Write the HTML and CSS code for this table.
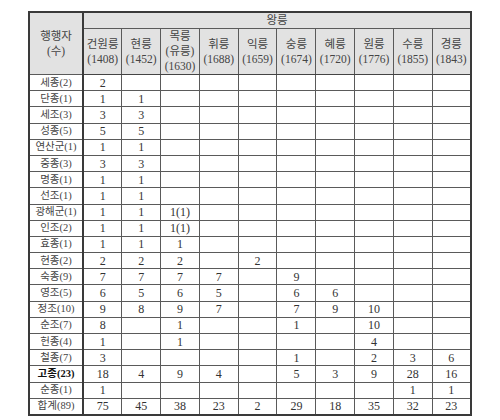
FILE: index.html
```html
<!DOCTYPE html>
<html lang="ko">
<head>
<meta charset="utf-8">
<link rel="stylesheet" href="styles.css">
</head>
<body>
<table class="tbl">
  <colgroup>
    <col class="c-first">
    <col span="10" class="c-data">
  </colgroup>
  <thead>
    <tr class="h1">
      <th rowspan="2" class="first">행행자<br>(수)</th>
      <th colspan="10">왕릉</th>
    </tr>
    <tr class="h2">
      <th>건원릉<br>(1408)</th>
      <th>현릉<br>(1452)</th>
      <th>목릉<br>(유릉)<br>(1630)</th>
      <th>휘릉<br>(1688)</th>
      <th>익릉<br>(1659)</th>
      <th>숭릉<br>(1674)</th>
      <th>혜릉<br>(1720)</th>
      <th>원릉<br>(1776)</th>
      <th>수릉<br>(1855)</th>
      <th>경릉<br>(1843)</th>
    </tr>
  </thead>
  <tbody>
    <tr><td class="first">세종(2)</td><td>2</td><td></td><td></td><td></td><td></td><td></td><td></td><td></td><td></td><td></td></tr>
    <tr><td class="first">단종(1)</td><td>1</td><td>1</td><td></td><td></td><td></td><td></td><td></td><td></td><td></td><td></td></tr>
    <tr><td class="first">세조(3)</td><td>3</td><td>3</td><td></td><td></td><td></td><td></td><td></td><td></td><td></td><td></td></tr>
    <tr><td class="first">성종(5)</td><td>5</td><td>5</td><td></td><td></td><td></td><td></td><td></td><td></td><td></td><td></td></tr>
    <tr><td class="first">연산군(1)</td><td>1</td><td>1</td><td></td><td></td><td></td><td></td><td></td><td></td><td></td><td></td></tr>
    <tr><td class="first">중종(3)</td><td>3</td><td>3</td><td></td><td></td><td></td><td></td><td></td><td></td><td></td><td></td></tr>
    <tr><td class="first">명종(1)</td><td>1</td><td>1</td><td></td><td></td><td></td><td></td><td></td><td></td><td></td><td></td></tr>
    <tr><td class="first">선조(1)</td><td>1</td><td>1</td><td></td><td></td><td></td><td></td><td></td><td></td><td></td><td></td></tr>
    <tr><td class="first">광해군(1)</td><td>1</td><td>1</td><td>1(1)</td><td></td><td></td><td></td><td></td><td></td><td></td><td></td></tr>
    <tr><td class="first">인조(2)</td><td>1</td><td>1</td><td>1(1)</td><td></td><td></td><td></td><td></td><td></td><td></td><td></td></tr>
    <tr><td class="first">효종(1)</td><td>1</td><td>1</td><td>1</td><td></td><td></td><td></td><td></td><td></td><td></td><td></td></tr>
    <tr><td class="first">현종(2)</td><td>2</td><td>2</td><td>2</td><td></td><td>2</td><td></td><td></td><td></td><td></td><td></td></tr>
    <tr><td class="first">숙종(9)</td><td>7</td><td>7</td><td>7</td><td>7</td><td></td><td>9</td><td></td><td></td><td></td><td></td></tr>
    <tr><td class="first">영조(5)</td><td>6</td><td>5</td><td>6</td><td>5</td><td></td><td>6</td><td>6</td><td></td><td></td><td></td></tr>
    <tr><td class="first">정조(10)</td><td>9</td><td>8</td><td>9</td><td>7</td><td></td><td>7</td><td>9</td><td>10</td><td></td><td></td></tr>
    <tr><td class="first">순조(7)</td><td>8</td><td></td><td>1</td><td></td><td></td><td>1</td><td></td><td>10</td><td></td><td></td></tr>
    <tr><td class="first">헌종(4)</td><td>1</td><td></td><td>1</td><td></td><td></td><td></td><td></td><td>4</td><td></td><td></td></tr>
    <tr><td class="first">철종(7)</td><td>3</td><td></td><td></td><td></td><td></td><td>1</td><td></td><td>2</td><td>3</td><td>6</td></tr>
    <tr><td class="first bold">고종(23)</td><td>18</td><td>4</td><td>9</td><td>4</td><td></td><td>5</td><td>3</td><td>9</td><td>28</td><td>16</td></tr>
    <tr><td class="first">순종(1)</td><td>1</td><td></td><td></td><td></td><td></td><td></td><td></td><td></td><td>1</td><td>1</td></tr>
    <tr><td class="first">합계(89)</td><td>75</td><td>45</td><td>38</td><td>23</td><td>2</td><td>29</td><td>18</td><td>35</td><td>32</td><td>23</td></tr>
  </tbody>
</table>
</body>
</html>
```
FILE: styles.css
```css
html, body {
  margin: 0;
  padding: 0;
  background: #fff;
}
body {
  padding: 11px 0 0 28px;
}
.tbl {
  border-collapse: collapse;
  table-layout: fixed;
  width: 443px;
  border: 2px solid #3a3a3a;
  font-family: "Liberation Serif", "Noto Sans CJK KR", serif;
  font-size: 12px;
  color: #333;
}
.c-first { width: 54px; }
.c-data { width: 38.8px; }
.tbl th, .tbl td {
  border: 1px solid #5a5a5a;
  padding: 0;
  text-align: center;
  vertical-align: middle;
  overflow: hidden;
  white-space: nowrap;
}
.tbl th {
  background: #e2e2e2;
  font-weight: normal;
  font-size: 11.5px;
  line-height: 15px;
  color: #444;
}
.tbl .first {
  border-right: 2px solid #3a3a3a;
}
.h1 th { height: 15px; }
.h2 th { height: 45px; }
.tbl td { height: 15.2px; line-height: 14px; }
.tbl thead tr.h2 th { border-bottom: 1px solid #444; }
.tbl td.first { font-size: 10.5px; color: #444; }
.tbl td.bold { font-weight: bold; color: #111; }
```
